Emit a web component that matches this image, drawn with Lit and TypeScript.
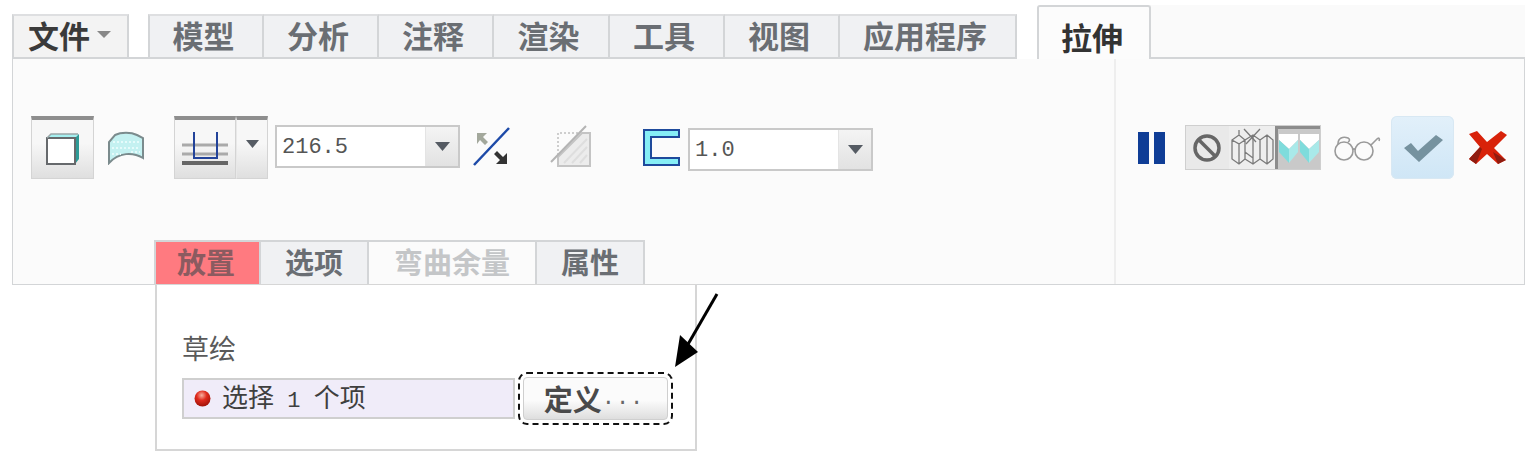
import { LitElement, html, css, svg } from "lit";
import { customElement } from "lit/decorators.js";

const caret = (w = 12, h = 8, c = "#555b63") =>
  svg`<svg width=${w} height=${h} viewBox="0 0 12 8" preserveAspectRatio="none"><path d="M0 0H12L6 8Z" fill=${c}/></svg>`;

@customElement("app-root")
export class AppRoot extends LitElement {
  static styles = css`
    :host { display: block; width: 1539px; height: 453px; position: relative; overflow: hidden; background: #fff;
      font-family: "Noto Sans CJK SC", "Liberation Sans", sans-serif; }
    svg { display: block; flex: none; }
    .ribbon { margin: 0 14px 0 12px; padding-top: 5px; }
    .tabs { display: flex; align-items: flex-end; height: 54px; background: linear-gradient(#fafafa, #fafafa) right / 375px 100% no-repeat; }
    .tab { display: flex; align-items: center; justify-content: center; box-sizing: border-box; height: 45px; padding: 0 5px 4px 0;
      font-size: 31px; line-height: 1; font-weight: 700; color: #6a6e73; background: #f0f1f3;
      border: 2px solid #d3d5d7; border-left: 0; border-top-color: #dedfe1; }
    .file { width: 117px; padding: 0 2px 4px 0; color: #3a3a3a; border-left: 2px solid #d3d5d7; gap: 7px; background: #f3f3f3; }
    .gap { width: 19px; border-bottom: 2px solid #d3d5d7; height: 45px; box-sizing: border-box; }
    .first { border-left: 2px solid #d3d5d7; }
    .active { width: 114px; height: 54px; background: #fcfcfc; color: #333; border: 2px solid #d3d5d7; border-bottom: 0; border-radius: 3px 3px 0 0; margin-left: 20px; padding: 6px 4px 0 0; }
    .rest { flex: 1; height: 45px; border-bottom: 2px solid #d3d5d7; box-sizing: border-box; }
    .panel { display: flex; height: 226px; box-sizing: border-box; background: #fbfbfb; border: solid #d3d5d7; border-width: 0 1px 1px 1px; }
    .main { width: 1101px; display: flex; flex-direction: column; }
    .row { display: flex; align-items: center; padding: 57px 0 0 18px; height: 120px; box-sizing: border-box; }
    .side { flex: 1; border-left: 2px solid #eeeeee; padding: 57px 0 0 22px; }
    .side-row { display: flex; align-items: center; height: 63px; }
    .tool { width: 63px; height: 63px; box-sizing: border-box; display: flex; align-items: center; justify-content: center;
      border: 1px solid #d4d4d4; border-top: 4px solid #8e8e8e; background: linear-gradient(#f7f7f7 40%, #dfdfdf); }
    .split { display: flex; margin-left: 29px; }
    .split .tool { width: 62px; }
    .split .drop { width: 32px; border-left: 1px solid #e8e8e8; align-items: flex-start; padding-top: 20px; }
    .combo { display: flex; box-sizing: border-box; width: 185px; height: 43px; background: #fff; border: 2px solid #c9c9c9; }
    .combo span { flex: 1; padding-left: 5px; font: 22px/42px "Liberation Mono", monospace; color: #555; }
    .combo i { width: 32px; display: flex; align-items: center; justify-content: center; background: linear-gradient(#f4f4f4, #e2e2e2); border-left: 1px solid #e4e4e4; }
    .subtabs { display: flex; margin: auto 0 0 141px; height: 44px; }
    .sub { display: flex; align-items: center; justify-content: center; box-sizing: border-box; height: 44px; padding: 0 0 4px 0; font-size: 29px; line-height: 1; font-weight: 700; color: #6a6e73; background: #f0f1f3; border: 2px solid #d3d5d7; border-bottom: 0; border-left: 0; }
    .sub.on { padding-right: 3px; background: #ff7a80; color: #8b5b60; border-left: 2px solid #d3d5d7; }
    .sub.off { background: #fbfbfb; color: #c4c6c8; }
    .pop { margin: -1px 0 0 155px; width: 542px; height: 167px; box-sizing: border-box; background: #fff; border: 2px solid #d6d6d6; border-top-width: 1px; padding: 45px 0 0 25px; }
    .label { font-size: 27px; line-height: 36px; color: #5a5a5a; height: 36px; }
    .def { display: flex; align-items: center; padding-top: 6px; }
    .field { display: flex; align-items: center; gap: 11px; box-sizing: border-box; width: 333px; height: 41px; padding-left: 10px; background: #f0ecf9; border: 2px solid #cfcfcf; font-size: 26px; line-height: 1; color: #3f3f3f; white-space: pre; }
    .mono { font: 22px "Liberation Mono", monospace; }
    .dash { margin-left: 3px; padding: 3px; border: 2px dashed #111; border-radius: 9px; }
    .btn { display: flex; align-items: center; justify-content: center; width: 145px; height: 43px; box-sizing: border-box; padding-right: 3px; border: 1px solid #cfcfcf; border-radius: 4px; background: linear-gradient(#fbfbfb 55%, #dedede); font-size: 29px; line-height: 1; font-weight: 700; color: #4a4a4a; }
    .dots { font: 22px "Liberation Mono", monospace; color: #666; letter-spacing: 1px; }
    .triple { display: flex; box-sizing: border-box; height: 45px; width: 136px; margin-left: 20px; border: 1px solid #cfcfcf; background: #e9e9e9; }
    .triple > div { display: flex; align-items: center; justify-content: center; height: 100%; }
    .t1 { width: 43px; }
    .t2 { width: 47px; background: #eeeeee; }
    .t3 { flex: 1; background: #c9c9c9; border-left: 3px solid #8c8c8c; border-top: 3px solid #8c8c8c; box-sizing: border-box; }
    .check { width: 63px; height: 63px; display: flex; align-items: center; justify-content: center; border-radius: 6px; margin-left: 10px; background: linear-gradient(#e2f0fa, #cfe6f6); box-shadow: inset 0 0 0 1px #d8e8f3; }
    .arrow { position: absolute; left: 665px; top: 285px; }
  `;

  render() {
    return html`
      <div class="ribbon">
        <div class="tabs">
          <div class="tab file">文件 ${caret(14, 7, "#888")}</div>
          <div class="gap"></div>
          <div class="tab first" style="width:116px">模型</div>
          <div class="tab" style="width:115px">分析</div>
          <div class="tab" style="width:115px">注释</div>
          <div class="tab" style="width:116px">渲染</div>
          <div class="tab" style="width:115px">工具</div>
          <div class="tab" style="width:115px">视图</div>
          <div class="tab" style="width:177px">应用程序</div>
          <div class="tab active">拉伸</div>
          <div class="rest"></div>
        </div>
        <div class="panel">
          <div class="main">
            <div class="row">
              <div class="tool">
                <svg width="36" height="34" viewBox="0 0 36 34">
                  <path d="M2 6 6 2H34L30 6Z" fill="#a5f0f0"/>
                  <path d="M30 6 34 2V27L30 32Z" fill="#2e9a96"/>
                  <path d="M2 6H30V32H2Z" fill="#fff" stroke="#66696c" stroke-width="2"/>
                  <path d="M2 6 6 2H33" fill="none" stroke="#9aa6a8" stroke-width="1.5"/>
                </svg>
              </div>
              <div style="margin-left:13px">
                <svg width="38" height="35" viewBox="0 0 38 35">
                  <path d="M2 33V12L8 5C14 2 24 2 30 5L36 8V28C26 22 12 22 2 33Z" fill="#c4f1f1" stroke="#7b8b8d" stroke-width="2"/>
                  <path d="M6 12H33M5 18H33M5 24H14M24 22H33" stroke="#e6fbfb" stroke-width="2" stroke-dasharray="2 2"/>
                </svg>
              </div>
              <div class="split">
                <div class="tool">
                  <svg width="46" height="36" viewBox="0 0 46 36">
                    <path d="M0 14H46M0 23H46" stroke="#aaa" stroke-width="3"/>
                    <path d="M0 32H46" stroke="#666" stroke-width="4"/>
                    <path d="M12 1V27H35V1" fill="none" stroke="#23439a" stroke-width="2"/>
                  </svg>
                </div>
                <div class="tool drop">${caret(13, 8)}</div>
              </div>
              <div class="combo" style="margin:-2px 0 0 7px"><span>216.5</span><i>${caret(15, 9)}</i></div>
              <div style="margin:-1px 0 0 13px">
                <svg width="38" height="40" viewBox="0 0 38 40">
                  <path d="M1 38 36 1" stroke="#1d4aa8" stroke-width="2.5"/>
                  <path d="M4 6H14L10 10 15 15 12 18 7 13 4 17Z" fill="#a3a89c"/>
                  <path d="M34 37H23L27 33 21 27 24 24 30 30 34 26Z" fill="#333"/>
                </svg>
              </div>
              <div style="margin:-4px 0 0 39px">
                <svg width="44" height="42" viewBox="0 0 44 42">
                  <path d="M8 41V32L32 8H40V41Z" fill="#ececec" stroke="#c4c4c4" stroke-width="2"/>
                  <path d="M14 38 37 14M22 38 37 22M30 38 37 30" stroke="#dedede" stroke-width="2"/>
                  <path d="M8 30V8H30" fill="none" stroke="#cecece" stroke-width="2" stroke-dasharray="2 2"/>
                  <path d="M1 37 36 1" stroke="#b4b4b4" stroke-width="2"/>
                </svg>
              </div>
              <div style="margin-left:49px">
                <svg width="37" height="37" viewBox="0 0 37 37">
                  <path d="M1 1H36V8H8V29H36V36H1Z" fill="#86eef6" stroke="#1e4a9c" stroke-width="2"/>
                </svg>
              </div>
              <div class="combo" style="margin:3px 0 0 8px"><span>1.0</span><i>${caret(15, 9)}</i></div>
            </div>
            <div class="subtabs">
              <div class="sub on" style="width:107px">放置</div>
              <div class="sub" style="width:108px">选项</div>
              <div class="sub off" style="width:168px">弯曲余量</div>
              <div class="sub" style="width:108px">属性</div>
            </div>
          </div>
          <div class="side">
            <div class="side-row">
              <svg width="27" height="32" viewBox="0 0 27 32"><path d="M0 0H11V32H0ZM16 0H27V32H16Z" fill="#0f3d96"/></svg>
              <div class="triple">
                <div class="t1">
                  <svg width="30" height="30" viewBox="0 0 30 30"><circle cx="15" cy="15" r="12" fill="none" stroke="#666" stroke-width="3.5"/><path d="M7 7 23 23" stroke="#666" stroke-width="3.5"/></svg>
                </div>
                <div class="t2">
                  <svg width="44" height="40" viewBox="0 0 44 40" fill="none" stroke="#7a7a7a" stroke-width="1.3">
                    <path d="M2 12 9 7 15 12V31L9 36 2 31ZM9 7V2M9 36V16L2 12M9 16 15 12M15 12 23 7 30 12V31L23 36 15 31M23 7V30M23 36V30L15 24M30 12 37 7 43 12V31L37 36 30 31M37 7V36"/>
                    <path d="M14 1 26 14M30 1 16 16"/>
                  </svg>
                </div>
                <div class="t3">
                  <svg width="42" height="34" viewBox="0 0 42 34">
                    <path d="M1 2H20V8L11 17 1 8ZM22 2H41V8L31 17 22 8Z" fill="#fff"/>
                    <path d="M1 8 11 17V31L1 20ZM22 8 31 17V31L22 20Z" fill="#7fdcdc"/>
                    <path d="M20 8 11 17V31L20 20ZM41 8 31 17V31L41 20Z" fill="#a9e9e9"/>
                  </svg>
                </div>
              </div>
              <div style="margin-left:12px">
                <svg width="48" height="26" viewBox="0 0 48 26" fill="none" stroke="#9a9a9a" stroke-width="1.6">
                  <circle cx="11" cy="16" r="9"/><circle cx="31" cy="16" r="9"/><path d="M20 15C21 13 21 13 22 15M5 9C5 3 10 1 15 3 17 4 17 6 15 7M38 10 44 4C46 2 47 4 46 6"/>
                </svg>
              </div>
              <div class="check">
                <svg width="40" height="30" viewBox="0 0 40 30"><path d="M1 15 8 10 15 18 33 2 40 7 16 29Z" fill="#76929f"/></svg>
              </div>
              <div style="margin-left:14px">
                <svg width="39" height="33" viewBox="0 0 39 33">
                  <path d="M1 3 9 0 19 11 33 0 39 4 26 17 38 29 30 33 19 23 8 33 1 28 12 16Z" fill="#d8220a"/>
                  <path d="M1 28 12 16 14 18 8 33ZM38 29 30 33 25 21Z" fill="#8f1c10"/>
                </svg>
              </div>
            </div>
          </div>
        </div>
      </div>
      <div class="pop">
        <div class="label">草绘</div>
        <div class="def">
          <div class="field">
            <svg width="17" height="17" viewBox="0 0 17 17">
              <defs><radialGradient id="r" cx="45%" cy="30%" r="70%"><stop offset="0" stop-color="#f8b0a0"/><stop offset=".45" stop-color="#e02b1e"/><stop offset="1" stop-color="#a01208"/></radialGradient></defs>
              <circle cx="8.5" cy="8.5" r="8" fill="url(#r)"/>
            </svg>
            <span>选择<span class="mono"> 1 </span>个项</span>
          </div>
          <div class="dash"><div class="btn">定义<span class="dots">...</span></div></div>
        </div>
      </div>
      <svg class="arrow" width="60" height="90" viewBox="0 0 60 90">
        <path d="M52 9 22 61" stroke="#000" stroke-width="3"/>
        <path d="M10 82 15 50 33 67Z" fill="#000"/>
      </svg>
    `;
  }
}
